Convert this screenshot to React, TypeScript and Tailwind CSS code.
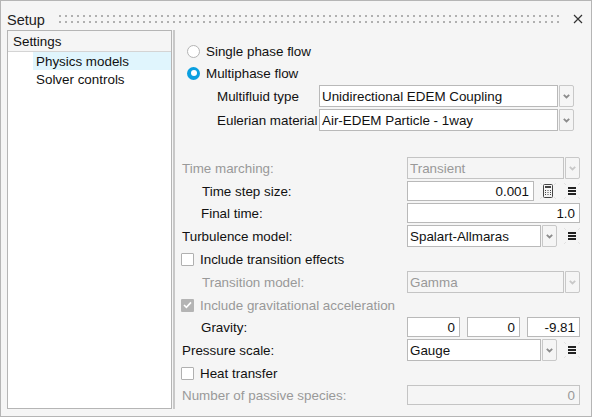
import type { ReactNode } from 'react';

const FONT = 'font-["Liberation_Sans",Arial,sans-serif]';

function Chevron({ faded }: { faded?: boolean }) {
  return (
    <svg width="7" height="5" viewBox="0 0 7 5" className={faded ? 'text-[#c8c8c8]' : 'text-[#8c8c8c]'}>
      <path d="M0.8 0.8l2.7 2.7 2.7-2.7" fill="none" stroke="currentColor" strokeWidth="1.8" />
    </svg>
  );
}

function Select({ value, disabled }: { value: string; disabled?: boolean }) {
  return (
    <div className="flex h-[22px] min-w-0 flex-1 gap-px">
      <div
        className={`flex flex-1 items-center border px-[2px] ${
          disabled ? 'border-[#c4c4c4] text-[#999]' : 'border-[#b9b9b9] bg-white text-[#111]'
        }`}
      >
        {value}
      </div>
      <div className="flex w-[15px] items-center justify-center rounded-r-[2px] border border-[#c8c8c8]">
        <Chevron faded={disabled} />
      </div>
    </div>
  );
}

function NumberInput({ value, disabled }: { value: string; disabled?: boolean }) {
  return (
    <div
      className={`flex h-5 min-w-0 flex-1 items-center justify-end border px-[4px] ${
        disabled ? 'border-[#c4c4c4] text-[#999]' : 'border-[#b9b9b9] bg-white text-[#111]'
      }`}
    >
      {value}
    </div>
  );
}

function IconTicks() {
  return <path d="M0 0l2 2M16 0l-2 2M0 16l2-2M16 16l-2-2" stroke="#e2e2e2" />;
}

function MenuIcon() {
  return (
    <svg width="16" height="16" viewBox="0 0 16 16" className="text-[#222]">
      <IconTicks />
      <path d="M4 5h8M4 8h8M4 11h8" stroke="currentColor" strokeWidth="2" />
    </svg>
  );
}

function CalcIcon() {
  return (
    <svg width="16" height="16" viewBox="0 0 16 16" className="text-[#444]">
      <IconTicks />
      <rect x="3.5" y="1.5" width="9" height="13" rx="1" fill="none" stroke="currentColor" />
      <path d="M5 4h6" stroke="currentColor" strokeWidth="2" />
      <path d="M5 7.5h1M7.5 7.5h1M10 7.5h1M5 9.5h1M7.5 9.5h1M10 9.5h1M5 11.5h1M7.5 11.5h1M10 11.5h1" stroke="currentColor" />
    </svg>
  );
}

function Row({
  label,
  indent,
  disabled,
  children,
  height = 'h-5',
}: {
  label: string;
  indent?: string;
  disabled?: boolean;
  children: ReactNode;
  height?: string;
}) {
  return (
    <div className={`flex ${height} items-center`}>
      <div className={`w-[225px] shrink-0 ${indent ?? ''} ${disabled ? 'text-[#999]' : 'text-[#111]'}`}>{label}</div>
      <div className="flex min-w-0 flex-1 items-center">{children}</div>
    </div>
  );
}

function Check({ label, checked, disabled }: { label: string; checked?: boolean; disabled?: boolean }) {
  return (
    <div className={`-ml-px flex h-5 items-center gap-[6px] ${disabled ? 'text-[#999]' : 'text-[#111]'}`}>
      <span
        className={`flex h-[13px] w-[13px] items-center justify-center rounded-[1px] ${
          checked ? 'bg-[#b4b4b4]' : 'border border-[#b0b0b0] bg-white'
        }`}
      >
        {checked && (
          <svg width="9" height="8" viewBox="0 0 9 8">
            <path d="M1 4l2.4 2.4L8 1.4" fill="none" stroke="#fff" strokeWidth="1.6" />
          </svg>
        )}
      </span>
      {label}
    </div>
  );
}

function Radio({ label, checked }: { label: string; checked?: boolean }) {
  return (
    <div className="flex h-5 items-center gap-[6px] pl-[5px] text-[#111]">
      {checked ? (
        <span className="flex h-[13px] w-[13px] items-center justify-center rounded-full bg-[#0a9fe0]">
          <span className="h-[6px] w-[6px] rounded-full bg-white" />
        </span>
      ) : (
        <span className="h-[13px] w-[13px] rounded-full border-[1.5px] border-[#b4b4b4] bg-white" />
      )}
      {label}
    </div>
  );
}

function TopSelect({ label, value }: { label: string; value: string }) {
  return (
    <div className="flex h-[22px] items-center pl-[35px] pr-[6px]">
      <div className="w-[102px] shrink-0 text-[#111]">{label}</div>
      <Select value={value} />
    </div>
  );
}

export default function App() {
  return (
    <div className={`flex h-[417px] w-[592px] flex-col overflow-hidden border border-[#b5b5b5] bg-[#f5f5f5] text-[13.4px] leading-[15px] ${FONT}`}>
      <div className="flex h-[29px] shrink-0 items-center pl-[6px] pr-[8px] pt-[6px]">
        <span className="mt-[3px] text-[14.5px] text-[#222]">Setup</span>
        <svg height="8" className="ml-[14px] min-w-0 flex-1">
          <pattern id="grip" width="6" height="6" patternUnits="userSpaceOnUse">
            <rect width="2" height="2" fill="#b0b0b0" />
          </pattern>
          <rect width="100%" height="8" fill="url(#grip)" />
        </svg>
        <svg width="10" height="10" viewBox="0 0 10 10" className="ml-[10px] text-[#333]">
          <path d="M1 1l8 8M9 1l-8 8" stroke="currentColor" strokeWidth="1.2" />
        </svg>
      </div>
      <div className="flex min-h-0 flex-1 pb-[7px] pl-[6px]">
        <div className="flex w-[165px] shrink-0 flex-col border border-[#b5b5b5] bg-white text-[#111]">
          <div className="flex h-[21px] shrink-0 items-center border-b border-[#d4d4d4] bg-[#f5f5f5] pl-[5px]">Settings</div>
          <div className="ml-[25px] flex h-[18px] items-center bg-[#e0f5fd] pl-[3px]">Physics models</div>
          <div className="ml-[25px] flex h-[18px] items-center pl-[3px]">Solver controls</div>
        </div>
        <div className="ml-px w-[2px] shrink-0 bg-[#c8c8c8]" />
        <div className="flex min-w-0 flex-1 flex-col gap-[2px] pl-[7px] pr-[11px] pt-[11px]">
          <Radio label="Single phase flow" />
          <Radio label="Multiphase flow" checked />
          <TopSelect label="Multifluid type" value="Unidirectional EDEM Coupling" />
          <TopSelect label="Eulerian material" value="Air-EDEM Particle - 1way" />
          <div className="h-[22px]" />
          <Row label="Time marching:" disabled height="h-[22px]">
            <Select value="Transient" disabled />
          </Row>
          <Row label="Time step size:" indent="pl-[20px]">
            <NumberInput value="0.001" />
            <div className="flex w-[46px] shrink-0 items-center justify-between pl-[6px]">
              <CalcIcon />
              <MenuIcon />
            </div>
          </Row>
          <Row label="Final time:" indent="pl-[19px]">
            <NumberInput value="1.0" />
          </Row>
          <Row label="Turbulence model:" height="h-[22px]">
            <Select value="Spalart-Allmaras" />
            <div className="flex w-[23px] shrink-0 justify-end">
              <MenuIcon />
            </div>
          </Row>
          <Check label="Include transition effects" />
          <Row label="Transition model:" indent="pl-[20px]" disabled height="h-[22px]">
            <Select value="Gamma" disabled />
          </Row>
          <Check label="Include gravitational acceleration" checked disabled />
          <Row label="Gravity:" indent="pl-[19px]">
            <div className="flex flex-1 gap-[7px]">
              <NumberInput value="0" />
              <NumberInput value="0" />
              <NumberInput value="-9.81" />
            </div>
          </Row>
          <Row label="Pressure scale:" height="h-[22px]">
            <Select value="Gauge" />
            <div className="flex w-[23px] shrink-0 justify-end">
              <MenuIcon />
            </div>
          </Row>
          <Check label="Heat transfer" />
          <Row label="Number of passive species:" disabled>
            <NumberInput value="0" disabled />
          </Row>
        </div>
      </div>
    </div>
  );
}
